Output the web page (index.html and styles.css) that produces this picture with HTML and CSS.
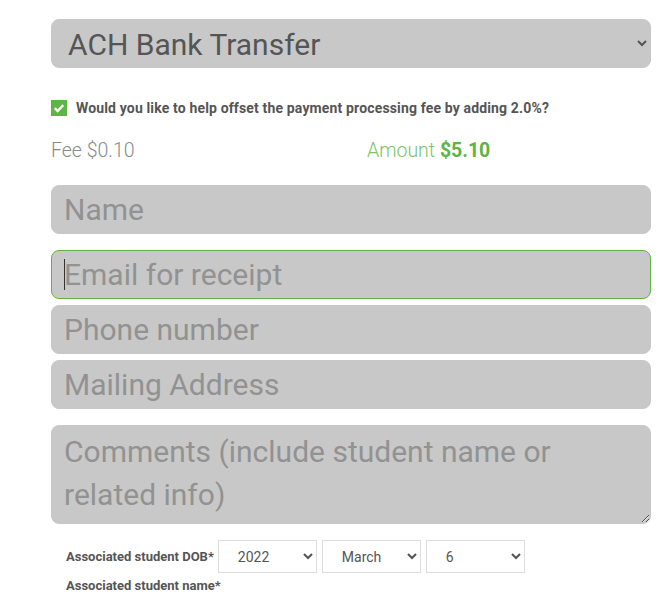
FILE: index.html
```html
<!DOCTYPE html>
<html lang="en">
<head>
    <meta charset="UTF-8">
    <meta name="viewport" content="width=device-width, initial-scale=1.0">
    <title>Payment</title>
    <link rel="stylesheet" href="styles.css">
</head>
<body>
    <div class="pay-form">
        <!-- Payment method -->
        <select class="method">
            <option>ACH Bank Transfer</option>
            <option>Credit Card</option>
        </select>

        <!-- Processing fee opt-in -->
        <label class="offset">
            <span class="check">
                <svg width="16" height="16" viewBox="0 0 16 16">
                    <rect width="16" height="16" fill="#5db543"/>
                    <path d="M3.8 8.2 L6.6 11 L12.2 5.2" fill="none" stroke="#fff" stroke-width="2.4"/>
                </svg>
            </span>
            Would you like to help offset the payment processing fee by adding 2.0%?
        </label>

        <div class="totals">
            <span class="fee">Fee $0.10</span>
            <span class="amount">Amount <b>$5.10</b></span>
        </div>

        <input class="field" type="text" placeholder="Name">
        <div class="field-wrap">
            <input class="field focused" type="email" placeholder="Email for receipt">
            <span class="caret"></span>
        </div>
        <input class="field tight" type="text" placeholder="Phone number">
        <input class="field tight" type="text" placeholder="Mailing Address">
        <textarea class="field comments" placeholder="Comments (include student name or related info)"></textarea>

        <!-- Student details -->
        <div class="dob-row">
            <span class="small-label">Associated student DOB*</span>
            <select class="dob">
                <option>2022</option>
            </select>
            <select class="dob">
                <option>March</option>
            </select>
            <select class="dob">
                <option>6</option>
            </select>
        </div>
        <div class="small-label name-label">Associated student name*</div>
    </div>
</body>
</html>
```

FILE: styles.css
```css
body {
    margin: 0;
    padding: 0;
    background: #fff;
    font-family: Roboto, 'Noto Sans', sans-serif;
    color: #555;
}

.pay-form {
    width: 600px;
    padding: 19px 0 0 51px;
    display: flex;
    flex-direction: column;
}

/* Big grey controls */
.method,
.field {
    box-sizing: border-box;
    width: 600px;
    height: 49px;
    margin: 0;
    border: 1px solid #c8c8c8;
    border-radius: 8px;
    background-color: #c8c8c8;
    font-family: Roboto, sans-serif;
    font-size: 30px;
    outline: none;
}

.method {
    color: #555;
    padding: 2px 8px 0 12px;
}

.field {
    padding: 0 12px;
    color: #555;
}

.field::placeholder {
    color: #929292;
}

.offset {
    display: flex;
    align-items: center;
    gap: 9px;
    margin-top: 32px;
    font-size: 14px;
    letter-spacing: 0.15px;
    font-weight: 700;
    color: #555;
}

.check {
    display: block;
    width: 16px;
    height: 16px;
}

.totals {
    display: grid;
    grid-template-columns: 316px 1fr;
    margin-top: 23px;
    font-size: 19.5px;
    font-weight: 300;
    line-height: 24px;
}

.fee {
    color: #8a8a8a;
}

.amount {
    color: #7cc466;
}

.amount b {
    font-weight: 700;
    color: #5db543;
}

.totals + .field {
    margin-top: 22px;
}

.field-wrap {
    position: relative;
    margin-top: 16px;
}

.field.focused {
    border-color: #5db543;
}

.caret {
    position: absolute;
    left: 13px;
    top: 9px;
    width: 1px;
    height: 31px;
    background: #333;
}

.field.tight {
    margin-top: 6px;
}

.comments {
    height: 99px;
    margin-top: 16px;
    padding: 4px 12px;
    line-height: 43px;
    resize: vertical;
}

.small-label {
    font-size: 13px;
    font-weight: 700;
    color: #555;
}

.dob-row {
    display: flex;
    align-items: center;
    gap: 5px;
    margin-top: 16px;
    padding-left: 15px;
}

.dob-row .small-label {
    margin-right: -1px;
}

.dob {
    box-sizing: border-box;
    width: 99px;
    height: 33px;
    padding: 0 12px 0 15px;
    border: 1px solid #ddd;
    border-radius: 0;
    background: #fff;
    font-family: Roboto, sans-serif;
    font-size: 14px;
    color: #555;
}

.name-label {
    margin-top: 5px;
    padding-left: 15px;
}
```
